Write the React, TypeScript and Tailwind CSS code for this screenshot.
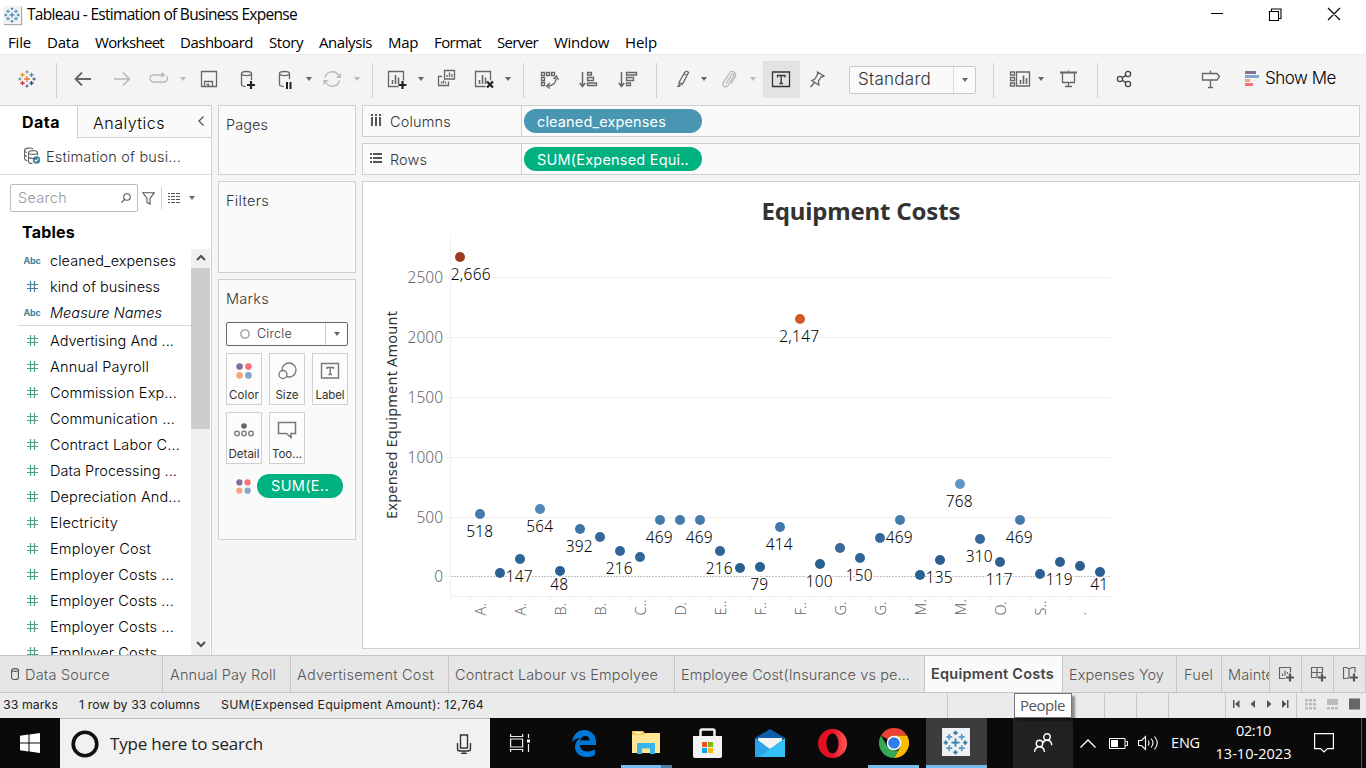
import React, { useLayoutEffect, useRef, useState } from "react";

const UI = "font-['Inter','Noto_Sans',sans-serif]";
const SYS = "font-['Open_Sans','Noto_Sans',sans-serif]";

/* Text whose letter spacing is computed so that it spans w pixels. */
function T({ w, c = "", children }: { w: number; c?: string; children: string }) {
  const ref = useRef<HTMLSpanElement>(null);
  const [ls, setLs] = useState(0);
  useLayoutEffect(() => {
    if (ref.current) {
      const n = ref.current.getBoundingClientRect().width;
      setLs((w - n) / children.length);
    }
  }, []);
  return (
    <span ref={ref} className={"inline-block shrink-0 whitespace-pre " + c} style={{ letterSpacing: ls + "px" }}>
      {children}
    </span>
  );
}

function Icon({ c = "", s = "#666", children, w = 1.3 }: { c?: string; s?: string; w?: number; children: React.ReactNode }) {
  return (
    <svg className={"h-6 w-6 shrink-0 " + c} viewBox="0 0 24 24" fill="none" stroke={s} strokeWidth={w}>
      {children}
    </svg>
  );
}

function Caret({ c = "", f = "#666" }: { c?: string; f?: string }) {
  return (
    <svg className={"h-1 w-1.5 shrink-0 " + c} viewBox="0 0 6 4" fill={f}>
      <path d="M0 0h6L3 4z" />
    </svg>
  );
}

const Sep = ({ c }: { c: string }) => <div className={"h-[35px] w-px shrink-0 bg-[#d0d0d0] " + c} />;

const pluses: [number, number, number, string, string][] = [
  [10, 10, 3.2, "#e8762c", "#2f7cab"],
  [5, 5.5, 2.4, "#eb912c", "#5a9bc2"],
  [15, 5.5, 2.4, "#59879b", "#5a9bc2"],
  [5, 14.5, 2.4, "#c72035", "#5a9bc2"],
  [15, 14.5, 2.4, "#1f447e", "#5a9bc2"],
  [10, 2.2, 1.7, "#7199a6", "#2f7cab"],
  [10, 17.8, 1.7, "#5b6591", "#2f7cab"],
  [2.2, 10, 1.7, "#7199a6", "#2f7cab"],
  [17.8, 10, 1.7, "#5b6591", "#2f7cab"],
];
function TableauMark({ c, mono = false }: { c: string; mono?: boolean }) {
  return (
    <svg className={c} viewBox="0 0 20 20" strokeWidth="1.4">
      {pluses.map(([x, y, r, a, b], i) => (
        <path key={i} stroke={mono ? b : a} d={`M${x - r} ${y}H${x + r}M${x} ${y - r}V${y + r}`} />
      ))}
    </svg>
  );
}

function TitleBar() {
  return (
    <div className="flex h-[30px] items-center">
      <div className="ml-[3px] flex h-[18px] w-[18px] items-center justify-center bg-[#f2f2f2] shadow-[1px_1px_1px_#aaa]">
        <TableauMark c="h-4 w-4" mono />
      </div>
      <T w={270} c={"-mt-px ml-[6px] text-[15.500px] text-black " + SYS}>Tableau - Estimation of Business Expense</T>
      <svg className="-mt-0.5 ml-auto mr-[25px] h-4 w-[131px]" viewBox="0 0 131 16" fill="none" stroke="#000" strokeWidth="1.1">
        <path d="M1 7.500h12M59.500 5.500h9v9h-9zM61.500 5.500v-2.500h9.500v9.500h-2.500M118 2l12 12M130 2l-12 12" />
      </svg>
    </div>
  );
}

const menus: [string, number][] = [["File", 23], ["Data", 32], ["Worksheet", 69], ["Dashboard", 73], ["Story", 34], ["Analysis", 53], ["Map", 30], ["Format", 47], ["Server", 41], ["Window", 55], ["Help", 32]];

function Toolbar() {
  const g = "#b8b8b8";
  return (
    <div className="flex h-[51px] items-center border-t border-[#ececec] bg-[#f4f4f4] [&>svg]:mb-[2px]">
      <div className="mb-[2px] ml-[15px] flex h-6 w-6 items-center justify-center"><TableauMark c="h-[18px] w-[18px]" /></div>
      <Sep c="ml-[17px]" />
      <Icon c="ml-[14px]" w={1.8}><path d="M20 12H4.500M11 5.500L4.500 12l6.500 6.500" /></Icon>
      <Icon c="ml-[15px]" s={g} w={1.6}><path d="M4 12h15.500M13 5.500l6.500 6.500-6.500 6.500" /></Icon>
      <Icon c="ml-[13px]" s={g}><path d="M13 8H6.500a3.500 3.500 0 0 0 0 7h10.500a3.500 3.500 0 0 0 2.500-6M11 8h5" /><path d="M14.500 5l4 3-4 3z" fill={g} stroke="none" /></Icon>
      <Caret c="ml-[9px]" f={g} />
      <Icon c="ml-[11px]"><path d="M4.500 4.500h15v15h-15zM7.500 19v-4.500h8V19M9.500 17.500h2V19" /></Icon>
      <Icon c="ml-[15px]"><path d="M15.500 13V6.500M5.500 6.500v11c0 1.200 1.500 1.800 4 2M5.500 6.500C5.500 3.800 15.500 3.800 15.500 6.500S5.500 9.200 5.500 6.500z" /><path d="M15 14v8M11 18h8" stroke="#222" strokeWidth="2.200" /></Icon>
      <Icon c="ml-[13px]"><path d="M16.500 12V6.500M6.500 6.500v11c0 1.200 1.500 1.800 4 2M6.500 6.500C6.500 3.800 16.500 3.800 16.500 6.500S6.500 9.200 6.500 6.500z" /><path d="M14 15v7M17.500 15v7" stroke="#222" strokeWidth="2" /></Icon>
      <Caret c="ml-[9px]" />
      <Icon c="ml-2" s={g}><path d="M5 10.500a7.300 7.300 0 0 1 13.500-2M19.500 13.500a7.300 7.300 0 0 1-13.500 2" /><path d="M21 6v5h-5zM3.500 18v-5h5z" fill={g} stroke="none" /></Icon>
      <Caret c="ml-[10px]" f={g} />
      <Sep c="ml-3" />
      <Icon c="ml-[13px]"><path d="M12.500 19.500h-10v-15h15v9" /><path d="M6.500 17v-4M9.500 17V8M12.500 17V10.500" strokeWidth="1.600" /><path d="M16.500 14v8M12.500 18h8" stroke="#222" strokeWidth="2.200" /></Icon>
      <Caret c="ml-2" />
      <Icon c="ml-[10px]"><path d="M10.500 3.500h10v8.500h-10zM8 9.500H4.500v9h10V14.500M13 10V8M15.500 10V5.500M18 10V7M7.500 16.500v-2M9.500 16.500v-3M11.500 16.500v-2" /></Icon>
      <Icon c="ml-[15px]"><path d="M12.500 19.500h-10v-15h15v9" /><path d="M6.500 17v-4M9.500 17V8M12.500 17V10.500" strokeWidth="1.600" /><path d="M14 14.500l6 6M20 14.500l-6 6" stroke="#222" strokeWidth="2.200" /></Icon>
      <Caret c="ml-2" />
      <Sep c="ml-3" />
      <Icon c="ml-[13px]"><path d="M4.500 5.500h3v3h-3zM9.500 5.500h3v3h-3zM14.500 5.500h3v3h-3zM4.500 10.500h3v3h-3zM4.500 15.500h3v3h-3zM19 11c.5 4-3 8-8 8" /><path d="M16.500 12l3-3 2 4M13 16l-3.500 3 3.500 2.500" /></Icon>
      <Icon c="ml-4"><path d="M5.500 5v14M2.800 16l2.700 3.500L8.200 16" strokeWidth="1.500" /><path d="M10.500 5.500h4v2.500h-4zM10.500 10.500h6v3h-6zM10.500 16h9v2.500h-9z" /></Icon>
      <Icon c="ml-[15px]"><path d="M5.500 5v14M2.800 16l2.700 3.500L8.200 16" strokeWidth="1.500" /><path d="M10.500 5.500h10v2.500h-10zM10.500 10.500h7v3h-7zM10.500 16h4v2.500h-4z" /></Icon>
      <Sep c="ml-4" />
      <Icon c="ml-[14px]"><path d="M8 15.500L14 5q2-1.500 3.500.5L11.500 17 8 19zM8 15.500l3.500 1.500M13 7l3.500 1.500M6 19.500q1.500-.5 3 0" /></Icon>
      <Caret c="ml-[6px]" />
      <Icon c="ml-[10px]" s={g}><path d="M9 17l5.500-9.500c1-1.700 3.200-.3 2.200 1.300L11 18.500c-2 3-6.500.5-4.700-2.800L12.500 6c2-3.300 8-.5 5.800 3.500L14 17" /></Icon>
      <Caret c="ml-[9px]" f={g} />
      <div className="mb-px ml-[7px] flex h-[37px] w-[37px] items-center justify-center bg-[#e3e3e3]">
        <Icon s="#333"><path d="M2.500 4h17v14.500h-17zM7.500 9.500V7.500h7.500V9.500M11.200 7.500v8M9.500 15.500h3.500" /></Icon>
      </div>
      <Icon c="ml-[5px]"><path d="M12.500 5l6.500 4-1.500.8-1-.3-3 4.500.3 4-7-4.500 3.200-1.500 2.500-4.500zM9.500 15.500L5.500 20" /></Icon>
      <div className="ml-5 flex h-7 w-[127px] items-center rounded-[2px] border border-[#c8c8c8] bg-[#fafafa]">
        <T w={73} c={"ml-2 text-[17px] font-light text-[#333] " + UI}>Standard</T>
        <div className="ml-auto flex h-full w-[22px] items-center justify-center border-l border-[#ddd]"><Caret /></div>
      </div>
      <Sep c="ml-[17px]" />
      <Icon c="ml-[14px]"><path d="M2.500 5h4v3h-4zM2.500 10.500h4v3h-4zM2.500 16h4v3h-4zM8.500 5h13v14h-13z" /><path d="M12.500 17v-4M15.500 17V8.500M18.500 17v-6" strokeWidth="1.600" /></Icon>
      <Caret c="ml-[6px]" />
      <Icon c="ml-[13px]"><path d="M3 5.500h17" strokeWidth="2" /><path d="M5.500 6v9.500h12V6M11.500 3.500v1M11.500 15.500V19M8 19.500h7" /></Icon>
      <Sep c="ml-4" />
      <Icon c="ml-[14px]" s="#444"><circle cx="8" cy="12" r="2.600" /><circle cx="16" cy="7" r="2.600" /><circle cx="16" cy="17" r="2.600" /><path d="M10.200 10.700l3.600-2.300M10.200 13.300l3.600 2.300" /></Icon>
      <Icon c="ml-[63px]"><path d="M3.500 6.500h14.500l2.500 3-2.500 3.500h-14.500zM11.500 3.500v3M11.500 13v7M9 20.500h5" /></Icon>
      <svg className="ml-[22px] h-4 w-[14px] shrink-0" viewBox="0 0 14 16"><path fill="#856f97" d="M0 0h11v3H0z" /><path fill="#84a6cc" d="M0 4h14v3H0z" /><path fill="#f6a67e" d="M0 8h5v3H0z" /><path fill="#f8707e" d="M0 12h8v3H0z" /></svg>
      <T w={71} c={"mb-[2px] ml-[6px] text-[17px] font-light text-black " + UI}>Show Me</T>
    </div>
  );
}

const dims: [string, string, number][] = [["Abc", "cleaned_expenses", 126], ["#", "kind of business", 110], ["Abc", "Measure Names", 112]];
const measures: [string, number][] = [["Advertising And ...", 124], ["Annual Payroll", 99], ["Commission Exp...", 127], ["Communication ...", 125], ["Contract Labor C...", 130], ["Data Processing ...", 127], ["Depreciation And...", 131], ["Electricity", 68], ["Employer Cost", 101], ["Employer Costs ...", 124], ["Employer Costs ...", 124], ["Employer Costs ...", 124], ["Employer Costs ...", 124]];

function Hash({ f }: { f: string }) {
  return <svg className="mb-px h-[11px] w-[11px]" viewBox="0 0 11 11" stroke={f} strokeWidth="1.200"><path d="M3.500 0v11M7.500 0v11M0 3.500h11M0 7.500h11" /></svg>;
}

function FieldRow({ kind, name, w, f, i = false }: { kind: string; name: string; w: number; f: string; i?: boolean }) {
  return (
    <div className="flex h-[26px] shrink-0 items-center">
      <div className={"ml-[22px] flex w-5 shrink-0 justify-center " + UI}>
        {kind === "Abc" ? <T w={17} c="text-[9px] font-bold text-[#3f7f9c]">Abc</T> : <Hash f={f} />}
      </div>
      <T w={w} c={"ml-2 text-[14.500px] font-light text-black " + UI + (i ? " italic" : "")}>{name}</T>
    </div>
  );
}

function DataPane() {
  return (
    <div className="flex h-full w-[212px] shrink-0 flex-col border-r border-t border-[#d0d0d0] bg-white">
      <div className="flex h-8 shrink-0">
        <div className="flex w-[77px] items-center"><T w={38} c={"ml-[22px] text-[16px] font-bold text-black " + UI}>Data</T></div>
        <div className="flex flex-1 items-center border-b border-l border-[#d0d0d0] bg-[#fafafa]">
          <T w={72} c={"ml-[15px] mt-0.5 text-[16px] font-light text-black " + UI}>Analytics</T>
          <svg className="-mt-0.5 ml-auto mr-[7px] h-[10px] w-[6px]" viewBox="0 0 6 10" fill="none" stroke="#555" strokeWidth="1.300"><path d="M5.500.5L1 5l4.500 4.500" /></svg>
        </div>
      </div>
      <div className="flex h-[37px] shrink-0 items-center border-b border-[#ddd]">
        <svg className="ml-6 h-[18px] w-[17px]" viewBox="0 0 17 18" fill="none" stroke="#666" strokeWidth="1.100">
          <path d="M9 2C7 .2.500 1 .500 3.500v8c0 1.500 1.500 2 3 2.300M.500 3.500c0 1 1 1.800 2.500 2M.500 7.500c0 1 1 1.500 2.500 1.800" />
          <path d="M13.500 8.500v-3C13.500 3 4.500 3 4.500 5.500v9c0 1.200 2 2 4 2M4.500 5.500C4.500 8 13.500 8 13.500 5.500M4.500 10c.5 1.200 2.500 1.500 5 1.500" />
          <circle cx="12.500" cy="13" r="3.700" fill="#3c7fa3" stroke="none" /><path d="M10.800 13l1.300 1.300 2.200-2.500" stroke="#fff" />
        </svg>
        <T w={135} c={"ml-[5px] mt-px text-[14.500px] font-light text-[#333] " + UI}>Estimation of busi...</T>
      </div>
      <div className="mt-[9px] flex h-7 shrink-0 items-center">
        <div className="ml-[10px] flex h-7 w-32 items-center rounded-[2px] border border-[#bbb]">
          <T w={49} c={"ml-[7px] text-[14.500px] font-light text-[#999] " + UI}>Search</T>
          <svg className="ml-auto mr-[6px] h-[10px] w-[10px]" viewBox="0 0 10 10" fill="none" stroke="#555" strokeWidth="1.100"><circle cx="6" cy="4" r="3.300" /><path d="M3.700 6.300L.5 9.500" /></svg>
        </div>
        <svg className="ml-[4px] h-[13px] w-[13px]" viewBox="0 0 13 13" fill="none" stroke="#555" strokeWidth="1.100"><path d="M.8.700h11.500L8 6.500v5.500L5 10.500v-4z" /></svg>
        <div className="ml-[6px] h-[22px] w-px bg-[#d0d0d0]" />
        <svg className="ml-[6px] h-[10px] w-3" viewBox="0 0 12 10" stroke="#555" strokeWidth="1.100"><path d="M0 .5h12M0 3.500h12M0 6.500h12M0 9.500h12" strokeDasharray="2 1 4 1 4 1" /></svg>
        <Caret c="ml-[9px]" />
      </div>
      <div className="mt-[2px] flex h-[35px] shrink-0 items-center pb-1.5"><T w={53} c={"ml-[22px] mt-1.5 text-[16px] font-bold text-black " + UI}>Tables</T></div>
      <div className="flex min-h-0 flex-1 overflow-hidden">
        <div className="-mt-px flex w-[191px] shrink-0 flex-col overflow-hidden">
          {dims.map(([k, n, w]) => <FieldRow key={n} kind={k} name={n} w={w} f="#3f7f9c" i={n === "Measure Names"} />)}
          <div className="mb-[2px] ml-[18px] -mt-px h-px shrink-0 bg-[#d8d8d8]" />
          {measures.map(([n, w], i) => <FieldRow key={i} kind="#" name={n} w={w} f="#4aa37f" />)}
        </div>
        <div className="-mt-[1px] flex w-[19px] flex-col items-center bg-[#f0f0f0]">
          <svg className="h-[20px] w-[10px] shrink-0" viewBox="0 0 10 20" fill="none" stroke="#505050" strokeWidth="2"><path d="M1 12l4-4 4 4" /></svg>
          <div className="h-[161px] w-full shrink-0 bg-[#cdcdcd]" />
          <svg className="mt-auto h-[21px] w-[10px] shrink-0" viewBox="0 0 10 21" fill="none" stroke="#505050" strokeWidth="2"><path d="M1 8l4 4 4-4" /></svg>
        </div>
      </div>
    </div>
  );
}

function ColorDots({ c }: { c: string }) {
  return <svg className={c} viewBox="0 0 16 16"><circle cx="3.600" cy="3.600" r="3.300" fill="#856f97" /><circle cx="12.400" cy="3.600" r="3.300" fill="#f8707e" /><circle cx="3.600" cy="12.400" r="3.300" fill="#f6a67e" /><circle cx="12.400" cy="12.400" r="3.300" fill="#84a6cc" /></svg>;
}

function MarkButton({ label, w, children }: { label: string; w: number; children: React.ReactNode }) {
  return (
    <div className="flex h-[52px] w-9 flex-col items-center border border-[#d0d0d0] bg-[#fcfcfc] pt-[5px]">
      <div className="flex h-6 items-center justify-center">{children}</div>
      <T w={w} c={"mt-[3px] text-[11.500px] leading-[18px] text-[#333] " + UI}>{label}</T>
    </div>
  );
}

function Cards() {
  const title = "text-[14.500px] font-light text-[#333] " + UI;
  const card = "border border-[#d0d0d0] bg-[#fafafa] pl-[7px] ";
  return (
    <div className="ml-[6px] flex w-[138px] shrink-0 flex-col gap-[6px]">
      <div className={card + "h-[70px] pt-[6px]"}><T w={42} c={title}>Pages</T></div>
      <div className={card + "h-[92px] pt-[6px]"}><T w={43} c={title}>Filters</T></div>
      <div className={card + "h-[261px] pt-[6px]"}>
        <div className="h-9"><T w={43} c={title}>Marks</T></div>
        <div className="flex h-6 w-[122px] items-center rounded-[2px] border border-[#666] bg-white">
          <svg className="ml-[13px] h-[10px] w-[10px]" viewBox="0 0 10 10"><circle cx="5" cy="5" r="4.200" fill="none" stroke="#999" strokeWidth="1.300" /></svg>
          <T w={35} c={"ml-[7px] text-[12.500px] font-light text-[#333] " + UI}>Circle</T>
          <div className="ml-auto flex h-full w-[22px] items-center justify-center border-l border-[#ccc]"><Caret /></div>
        </div>
        <div className="mt-[7px] grid w-[122px] grid-cols-3 gap-x-[7px] gap-y-[7px]">
          <MarkButton label="Color" w={30}><ColorDots c="h-4 w-4" /></MarkButton>
          <MarkButton label="Size" w={23}><Icon s="#777"><circle cx="14" cy="11" r="7" /><circle cx="8" cy="15.500" r="4" fill="#fafafa" /></Icon></MarkButton>
          <MarkButton label="Label" w={29}><Icon s="#777" w={1.4}><path d="M3.500 4.500h17v14.500h-17zM9 10V8.500h6.500V10M12.200 8.500v7M10.500 15.500h3.500" /></Icon></MarkButton>
          <MarkButton label="Detail" w={31}><Icon s="#777"><circle cx="12" cy="8" r="2.800" fill="#666" stroke="none" /><circle cx="5" cy="15.500" r="2.300" /><circle cx="12" cy="15.500" r="2.300" /><circle cx="19" cy="15.500" r="2.300" /></Icon></MarkButton>
          <MarkButton label="Too..." w={30}><Icon s="#777" w={1.5}><path d="M3.500 4.500h17v11h-4.500v4l-4.500-4h-8z" /></Icon></MarkButton>
        </div>
        <div className="mt-[10px] flex items-center">
          <ColorDots c="ml-[10px] h-[15px] w-[15px]" />
          <div className="ml-[6px] flex h-6 w-[86px] items-center justify-center rounded-full bg-[#00b180]"><T w={58} c={"text-[14.500px] text-white " + UI}>SUM(E..</T></div>
        </div>
      </div>
    </div>
  );
}

function Shelf({ label, w, icon, pill, pw, color }: { label: string; w: number; icon: React.ReactNode; pill: string; pw: number; color: string }) {
  return (
    <div className="flex h-8 shrink-0 items-center border border-[#d0d0d0] bg-[#fafafa]">
      <div className="flex h-full w-[159px] items-center border-r border-[#d0d0d0] pl-[7px]">
        <svg className="mb-0.5 h-3 w-3" viewBox="0 0 12 12" fill="#555">{icon}</svg>
        <T w={w} c={"ml-2 mt-px text-[14.500px] font-light text-[#333] " + UI}>{label}</T>
      </div>
      <div className={"ml-[2px] flex h-6 w-[178px] items-center rounded-full pl-[13px] " + color}><T w={pw} c={"mt-px text-[14.500px] text-white " + UI}>{pill}</T></div>
    </div>
  );
}

const D = "#2c5f92", M = "#37699c", B = "#457aad", L = "#5087b9";
const dots: [number, string][] = [
  [257, "#9f3a21"], [514, B], [573, D], [559, "#316598"], [509, L], [571, D], [529, "#3f73a7"], [537, M], [551, "#316598"], [557, "#316598"], [520, B], [520, B], [520, B], [551, "#316598"], [568, D], [567, D], [527, "#4278ab"], [319, "#cf5a24"], [564, D], [548, M], [558, "#316598"], [538, M], [520, B], [575, D], [560, D], [484, "#5e97c6"], [539, M], [562, D], [520, B], [574, D], [562, D], [566, D], [572, D],
];
const labels: [number, number, string][] = [
  [471, 275, "2,666"], [480, 532, "518"], [519.5, 577, "147"], [540, 527, "564"], [559.5, 585, "48"], [579.5, 547, "392"], [619.5, 569, "216"], [659.5, 538, "469"], [699.5, 538, "469"], [719.5, 569, "216"], [759.5, 585, "79"], [779.5, 545, "414"], [799.5, 337, "2,147"], [819.5, 582, "100"], [859.5, 576, "150"], [899.5, 538, "469"], [939.5, 578, "135"], [959.5, 502, "768"], [979.5, 557, "310"], [999.5, 580, "117"], [1019.5, 538, "469"], [1059.5, 580, "119"], [1099.5, 585, "41"],
];
const cats = ["A.", "A.", "B.", "B.", "C..", "D.", "E..", "F..", "F..", "G.", "G.", "M.", "M.", "O.", "S..", " ."];

function Chart() {
  return (
    <svg className="block h-[466px] w-[996px] font-['Noto_Sans',sans-serif]" viewBox="363 182 996 466">
      <text x="761.500" y="220" textLength="199" className="fill-[#333] text-[24px] font-bold">Equipment Costs</text>
      <g stroke="#f0f0f0" fill="none">
        {[277.5, 337.5, 397.5, 457.5, 517.5].map((y) => <path key={y} d={`M445 ${y}H1111`} />)}
        <path d="M450.500 236v360.500H1111M445 576.500h5" />
        {Array.from({ length: 34 }, (_, i) => <path key={i} d={`M${450.5 + i * 20} 597v3`} />)}
      </g>
      <path d="M451 576.500H1111" stroke="#c0c0c0" strokeDasharray="2 1" />
      {[2500, 2000, 1500, 1000, 500, 0].map((v, i) => (
        <text key={v} x="443" y={282.5 + i * 60 - (i === 5 ? 1 : 0)} textAnchor="end" className="fill-[#666] text-[15.500px] font-light">{v}</text>
      ))}
      <text transform="translate(396.5 519) rotate(-90)" textLength="208" className="fill-[#333] text-[14.500px]">Expensed Equipment Amount</text>
      {labels.map(([x, y, t], i) => (
        <text key={i} x={x - 0.3} y={y + 5} textAnchor="middle" textLength={t.length === 2 ? 18 : t.length === 3 ? 27 : 40} className="fill-black stroke-white stroke-[3px] text-[15.500px] font-light [paint-order:stroke]">{t}</text>
      ))}
      {dots.map(([y, f], i) => <circle key={i} cx={460 + i * 20} cy={y} r="5" fill={f} />)}
      {cats.map((t, i) => (
        <text key={i} transform={`translate(${486 + i * 40} 615.5) rotate(-90)`} className="fill-[#666] text-[14.500px] font-light">{t}</text>
      ))}
    </svg>
  );
}

const sheetText = "text-[14.500px] font-light text-[#555] " + UI;
const plus = <path d="M12 7.500v8M8 11.500h8" stroke="#555" strokeWidth="2.200" />;

function SheetTab({ name, w, c }: { name: string; w: number; c: string }) {
  return <div className={"flex h-full shrink-0 items-center overflow-hidden border-r border-[#c6c6c6] pt-[2px] " + c}><T w={w} c={sheetText}>{name}</T></div>;
}

function NewTab({ c, children }: { c: string; children: React.ReactNode }) {
  return (
    <div className={"flex h-full shrink-0 items-center border-r border-[#c6c6c6] pl-2 " + c}>
      <svg className="h-4 w-4" viewBox="0 0 16 16" fill="none" stroke="#666" strokeWidth="1.200">{children}{plus}</svg>
    </div>
  );
}

function SheetTabs() {
  return (
    <div className="flex h-[38px] shrink-0 border-y border-[#c6c6c6] bg-[#e6e6e6]">
      <div className="flex w-[163px] shrink-0 items-center border-r border-[#c6c6c6]">
        <svg className="ml-[11px] h-3 w-2 shrink-0" viewBox="0 0 8 12" fill="none" stroke="#555" strokeWidth="1.100"><ellipse cx="4" cy="2" rx="3.400" ry="1.400" /><path d="M.6 2v8c0 2 6.800 2 6.800 0V2" /></svg>
        <T w={85} c={"ml-[6px] mt-[2px] " + sheetText}>Data Source</T>
      </div>
      <SheetTab name="Annual Pay Roll" w={106} c="w-[128px] pl-[7px]" />
      <SheetTab name="Advertisement Cost" w={137} c="w-[158px] pl-[6px]" />
      <SheetTab name="Contract Labour vs Empolyee" w={203} c="w-[226px] pl-[6px]" />
      <SheetTab name="Employee Cost(Insurance vs pe..." w={229} c="w-[250px] pl-[6px]" />
      <div className="flex w-[138px] shrink-0 items-center border-r border-[#c6c6c6] bg-[#fafafa] pl-[6px]"><T w={123} c={"text-[14.500px] font-semibold text-[#444] " + UI}>Equipment Costs</T></div>
      <SheetTab name="Expenses Yoy" w={95} c="w-[114px] pl-[6px]" />
      <SheetTab name="Fuel" w={29} c="w-[45px] pl-[7px]" />
      <SheetTab name="Maintenance" w={88} c="w-[48px] pl-[6px]" />
      <NewTab c="w-8"><path d="M7.500 12.500H1.500v-11h11v5M4.500 10V7.500M7 10V4.500M9.500 8V6" /></NewTab>
      <NewTab c="w-8"><path d="M7.500 11.500H1.500v-10h11v5M7 1.500v10M1.500 6.500h11" /></NewTab>
      <NewTab c="w-8"><path d="M7.500 12.500l-1-.5-5 .5v-11h3L7 3l3-1.500h3v5M7 3v9" /></NewTab>
    </div>
  );
}

function StatusBar() {
  const s = "text-[12.300px] text-[#222] " + UI;
  const cell = "h-full shrink-0 border-r border-[#c8c8c8] ";
  return (
    <div className="relative flex h-[25px] shrink-0 items-center bg-[#ebebeb]">
      <div className={cell + "flex w-[948px] items-center"}>
        <T w={55} c={"ml-[3px] " + s}>33 marks</T>
        <T w={121} c={"ml-[21px] " + s}>1 row by 33 columns</T>
        <T w={263} c={"ml-[21px] " + s}>SUM(Expensed Equipment Amount): 12,764</T>
      </div>
      <div className={cell + "w-[157px]"} />
      <div className={cell + "w-8"} />
      <div className={cell + "w-8"} />
      <div className={cell + "w-[57px]"} />
      <div className={cell + "flex w-[71px] items-center pb-[3px] pl-[7px]"}>
        <svg className="h-2 w-[56px]" viewBox="0 0 56 8" fill="#555"><path d="M0 0h1.500v8H0zM6.500 0v8L2 4zM22 0v8l-4.500-4zM34 0v8l4.500-4zM49 0v8l4.500-4zM54 0h1.500v8H54z" /></svg>
      </div>
      <svg className="mb-[3px] ml-2 h-3 w-[56px] shrink-0" viewBox="0 0 56 12" fill="#bbb"><path d="M0 1h3v2.500H0zM4 1h3v2.500H4zM8 1h3v2.500H8zM0 5h3v2.500H0zM4 5h3v2.500H4zM8 5h3v2.500H8zM0 9h3v2.500H0zM4 9h3v2.500H4zM8 9h3v2.500H8zM22 1h11v6H22zM22 9h3v2.500h-3zM26 9h3v2.500h-3zM30 9h3v2.500h-3z" /><path d="M44 .500h11v11H44z" fill="#666" /></svg>
      <div className="absolute left-[1014px] top-0 flex h-[25px] w-[58px] items-center border border-[#767676] bg-white pl-[5px] shadow-[3px_3px_2px_rgba(0,0,0,0.4)]"><T w={45} c={"text-[15px] text-[#555] " + SYS}>People</T></div>
    </div>
  );
}

function Taskbar() {
  const task = "flex h-full shrink-0 items-center justify-center ";
  return (
    <div className="flex h-[50px] shrink-0 items-center bg-[#0a0a0a] text-white">
      <div className={task + "w-[60px]"}>
        <svg className="h-5 w-5" viewBox="0 0 20 20" fill="#fff"><path d="M0 2.800L8.500 1.500v8H0zM9.500 1.400L20 0v9.500H9.500zM0 10.500h8.500v8L0 17.300zM9.500 10.500H20V20L9.500 18.600z" /></svg>
      </div>
      <div className="flex h-full w-[430px] shrink-0 items-center border-t border-[#bbb] bg-[#f1f1f1]">
        <svg className="ml-[11px] h-7 w-7 shrink-0" viewBox="0 0 28 28"><circle cx="14" cy="14" r="11.800" fill="none" stroke="#111" strokeWidth="3.600" /></svg>
        <T w={153} c={"ml-[11px] text-[17px] text-[#222] " + SYS}>Type here to search</T>
        <svg className="ml-auto mr-[18px] h-5 w-4 shrink-0" viewBox="0 0 16 20" fill="none" stroke="#333" strokeWidth="1.400"><path d="M4.500 1h7v13h-7zM1.500 9v5.500q0 2.500 2.500 2.500h8q2.500 0 2.500-2.500V9M8 17v2.500M5 19.500h6" /></svg>
      </div>
      <div className={task + "w-[60px]"}>
        <svg className="h-5 w-5" viewBox="0 0 20 20" fill="none" stroke="#eee" strokeWidth="1.200"><path d="M.6 1v2.500h12V1M.6 6h12v8h-12zM.6 19v-2.500h12V19M18.500 1v4M18.500 11v8" /><path d="M17 6.500h3v3h-3z" fill="#fff" stroke="none" /></svg>
      </div>
      <div className={task + "w-[71px] pr-[3px]"}>
        <svg className="h-[27px] w-6" viewBox="0 0 24 27" fill="#0078d7"><path d="M0 12C1 4.500 6 0 12.500 0 19.500 0 24 5 24 12v3H8c.2 4.500 3.500 6.500 7.500 6.500 2.700 0 5-.7 7.500-2v5.500C20.500 26.500 17.500 27 14.500 27 7.500 27 3 22.500 3 17c0-4 2-7 5.500-9C5.500 8 2 9.500 0 12zM8.300 10.500h9.200C17.500 7.500 16 6 13.300 6 10.500 6 8.700 8 8.300 10.500z" /></svg>
      </div>
      <div className={task + "w-[51px] flex-col"}>
        <svg className="mr-[2px] mt-[12px] h-6 w-7" viewBox="0 0 28 24"><path fill="#f7cb4d" d="M0 1h11l3 3h14v19H0z" /><path fill="#ffe694" d="M0 5h11l3-2h14v20H0z" /><path fill="#fff" d="M3 2h6v1.500H3z" /><path fill="#39b3ea" d="M5 24V13h18v11h-5v-5.500h-8V24z" /></svg>
        <div className="mt-auto flex h-[3px] w-[51px]"><div className="w-10 bg-[#76b9ed]" /><div className="flex-1 bg-[#4f7ca3]" /></div>
      </div>
      <div className={task + "w-[71px]"}>
        <svg className="h-[30px] w-[29px]" viewBox="0 0 29 30"><path fill="none" stroke="#eee" strokeWidth="2.500" d="M7.500 9V3q0-1.500 1.500-1.500h11q1.500 0 1.500 1.500v6" /><path fill="#f2f2f2" d="M0 8h29v20q0 2-2 2H2q-2 0-2-2z" /><path fill="#f25022" d="M9 14h5v5H9z" /><path fill="#7fba00" d="M15 14h5v5h-5z" /><path fill="#00a4ef" d="M9 20h5v5H9z" /><path fill="#ffb900" d="M15 20h5v5h-5z" /></svg>
      </div>
      <div className={task + "w-[54px]"}>
        <svg className="h-7 w-[30px]" viewBox="0 0 30 28"><path fill="#0f5ca8" d="M0 9L15 0l15 9-15 9z" /><path fill="#f4f4f4" d="M3 9h24v5l-12 9L3 14z" /><path fill="#2aa3e8" d="M0 9l15 11v8H0z" /><path fill="#35c0f5" d="M30 9L12 22l-8 6h26z" /></svg>
      </div>
      <div className={task + "w-[71px]"}>
        <svg className="h-[29px] w-[29px]" viewBox="0 0 29 29"><defs><linearGradient id="op" x1="0" x2="1"><stop offset="0" stopColor="#d8101f" /><stop offset=".5" stopColor="#e81224" /><stop offset="1" stopColor="#ff5a5a" /></linearGradient></defs><path fill="url(#op)" fillRule="evenodd" d="M14.500 0a14.500 14.500 0 1 0 0 29a14.500 14.500 0 1 0 0-29zM14.500 4.500c3.500 0 6 4.500 6 10s-2.500 10-6 10-6-4.500-6-10 2.500-10 6-10z" /></svg>
      </div>
      <div className={task + "w-[51px] flex-col"}>
        <svg className="mt-[10px] h-[30px] w-[30px]" viewBox="0 0 30 30"><path fill="#ea4335" d="M15 15L2 7.500A15 15 0 0 1 28 7.500H15z" /><path fill="#fbbc05" d="M15 7.500h13A15 15 0 0 1 15 30l6.500-11.200z" /><path fill="#34a853" d="M2 7.500l6.500 11.300L15 22.500h4.300L15 30A15 15 0 0 1 2 7.500z" /><circle cx="15" cy="15" r="7.300" fill="#fff" /><circle cx="15" cy="15" r="5.800" fill="#2f7cee" /></svg>
        <div className="mt-auto h-[3px] w-[51px] bg-[#76b9ed]" />
      </div>
      <div className={task + "ml-[7px] w-[61px] flex-col bg-[#3c3c3c]"}>
        <div className="mr-[2px] mt-[10px] flex h-7 w-7 items-center justify-center bg-[#eef1f4]"><TableauMark c="h-[25px] w-[25px]" mono /></div>
        <div className="mt-auto h-[3px] w-full bg-[#76b9ed]" />
      </div>
      <div className={task + "ml-[26px] w-[60px] bg-[#222]"}>
        <svg className="h-5 w-5" viewBox="0 0 20 20" fill="none" stroke="#fff" strokeWidth="1.400"><circle cx="14" cy="4" r="3.200" /><path d="M10 10q1-2.800 4-2.800 4.500 0 4.800 5" /><circle cx="6.500" cy="10.500" r="3.200" /><path d="M1.500 19q.5-5.300 5-5.300T11.500 19" /></svg>
      </div>
      <svg className="ml-[7px] h-[9px] w-4 shrink-0" viewBox="0 0 16 9" fill="none" stroke="#fff" strokeWidth="1.300"><path d="M.5 8.500L8 1l7.500 7.500" /></svg>
      <svg className="ml-[13px] h-[11px] w-[19px] shrink-0" viewBox="0 0 19 11" fill="none" stroke="#fff"><path d="M.5.500h15.500v10H.500zM16.500 3.500h2v4h-2" /><path fill="#fff" stroke="none" d="M2 2h7v7H2z" /></svg>
      <svg className="ml-[10px] h-4 w-[21px] shrink-0" viewBox="0 0 21 16" fill="none" stroke="#fff" strokeWidth="1.100"><path d="M.6 5.500h3L7.500 1.500v13L3.500 10.500h-3zM10 5.500q2 2.500 0 5M13 3.500q4 4.500 0 9M16.500 1.500q5.500 6.500 0 13" /></svg>
      <T w={29} c={"ml-3 text-[14.500px] " + SYS}>ENG</T>
      <div className={"mb-[2px] ml-[15px] flex w-[77px] shrink-0 flex-col items-center text-[14.500px] leading-[23px] " + SYS}>
        <T w={35}>02:10</T><T w={76}>13-10-2023</T>
      </div>
      <svg className="ml-[22px] h-5 w-5 shrink-0" viewBox="0 0 20 20" fill="none" stroke="#fff" strokeWidth="1.200"><path d="M.600.600h18.800v15h-6L10 19l-3.500-3.400H.600z" /></svg>
      <div className="ml-auto mr-1 h-full w-px bg-[#555]" />
    </div>
  );
}

export default function App() {
  return (
    <div className="flex h-[768px] w-[1366px] flex-col overflow-hidden bg-white">
      <TitleBar />
      <div className={"flex h-6 items-center gap-4 pl-2 text-[15px] text-black " + SYS}>
        {menus.map(([m, w]) => <T key={m} w={w}>{m}</T>)}
      </div>
      <Toolbar />
      <div className="flex h-[550px] shrink-0 bg-[#f5f5f5]">
        <DataPane />
        <Cards />
        <div className="ml-[6px] mr-[6px] flex min-w-0 flex-1 flex-col gap-[6px]">
          <Shelf label="Columns" w={61} pill="cleaned_expenses" pw={129} color="bg-[#4996b2]" icon={<path d="M1 0h2v2H1zM5 0h2v2H5zM9 0h2v2H9zM1 3h2v9H1zM5 3h2v9H5zM9 3h2v9H9z" />} />
          <Shelf label="Rows" w={37} pill="SUM(Expensed Equi.." pw={152} color="bg-[#00b180]" icon={<path d="M0 1h2v2H0zM0 5h2v2H0zM0 9h2v2H0zM3 1h9v2H3zM3 5h9v2H3zM3 9h9v2H3z" />} />
          <div className="h-[468px] w-[998px] border border-[#d0d0d0] bg-white"><Chart /></div>
        </div>
      </div>
      <SheetTabs />
      <StatusBar />
      <Taskbar />
    </div>
  );
}
